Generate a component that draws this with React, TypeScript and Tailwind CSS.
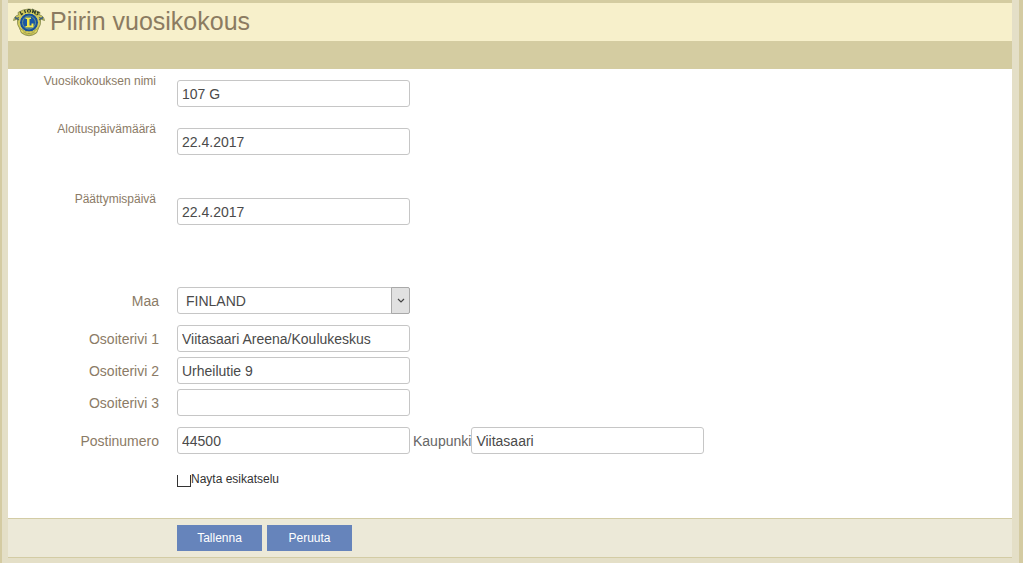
import type { ReactNode } from "react";

const fieldClass =
  "h-[27px] w-[233px] rounded-[3px] border border-[#c6c6c6] bg-white px-1 text-sm text-[#4a4a4a] outline-none";

function Logo() {
  return (
    <svg viewBox="0 0 64 58" className="h-[29px] w-8 shrink-0" role="img" aria-label="Lions">
      <path
        d="M1 25 Q3 15 11 14 L10 9 Q31 -5 54 9 L53 14 Q61 15 63 25 L55 22 Q57 34 50 42 L47 50 Q32 61 17 50 L14 42 Q7 34 9 22 Z"
        fill="#cfc75c"
        stroke="#7c8348"
        strokeWidth="1.5"
      />
      <path d="M4 22 L12 19 M4 18 L12 24 M60 22 L52 19 M60 18 L52 24" fill="none" stroke="#3f5f7a" strokeWidth="2.5" />
      {/* LIONS lettering strokes on the ribbon */}
      <path
        d="M14 7 L17 13 L20 11 M23 4 L25 10 M32 3 a3 3 0 1 0 .1 0 M39 10 L40 4 L44 11 L45 5 M53 9 L49 8 L50 12 L47 14"
        fill="none"
        stroke="#2e3d2a"
        strokeWidth="2.4"
      />
      <circle cx="32" cy="29" r="19" fill="#174f9c" stroke="#e0d95c" strokeWidth="2" />
      <circle cx="32" cy="29" r="13" fill="#1a57a5" stroke="#6f9a84" strokeWidth="2" />
      <path d="M25 19 H36 V22 H33 V35 H37 V31 H41 V39 H25 V36 H28 V22 H25 Z" fill="#f4e94a" />
      <path d="M13 41 Q32 55 51 41 L47 49 Q32 59 17 49 Z" fill="#e3db62" stroke="#858545" strokeWidth="1" />
      <path d="M21 48 Q32 54 43 48" fill="none" stroke="#76783e" strokeWidth="2" strokeDasharray="2 1" />
    </svg>
  );
}

type RowProps = {
  id: string;
  label: string;
  className?: string;
  top?: boolean;
  children: ReactNode;
};

function Row({ id, label, className = "", top = false, children }: RowProps) {
  return (
    <div className={`flex ${top ? "items-start" : "items-center"} ${className}`}>
      <label
        htmlFor={id}
        className={
          top
            ? "w-[148px] shrink-0 text-right text-xs leading-4 text-[#8b7b66]"
            : "w-[151px] shrink-0 text-right text-sm text-[#8b7b66]"
        }
      >
        {label}
      </label>
      <div className={top ? "ml-[21px] flex pt-[7px]" : "ml-[18px] flex items-center"}>{children}</div>
    </div>
  );
}

export default function App() {
  return (
    <div className="min-h-screen border-r-4 border-l-2 border-[#d4cba2] bg-[#e4dfc7] pr-[7px] pl-[6px] font-['Liberation_Sans',Arial,sans-serif]">
      <header className="border-t-[3px] border-[#d4cca1]">
        <div className="flex h-[38px] items-center gap-[5px] bg-[#f7f0cb] pl-[5px]">
          <Logo />
          <h1 className="text-[25px] text-[#8b7b61]">Piirin vuosikokous</h1>
        </div>
        <div className="h-7 bg-[#d4cca1]" />
      </header>

      <form onSubmit={(e) => e.preventDefault()}>
        <div className="bg-white pt-1 pb-[31px]">
          <Row id="name" label="Vuosikokouksen nimi" top>
            <input id="name" className={fieldClass} defaultValue="107 G" />
          </Row>
          <Row id="start" label="Aloituspäivämäärä" className="mt-[14px]" top>
            <input id="start" className={fieldClass} defaultValue="22.4.2017" />
          </Row>
          <Row id="end" label="Päättymispäivä" className="mt-9" top>
            <input id="end" className={fieldClass} defaultValue="22.4.2017" />
          </Row>

          <Row id="country" label="Maa" className="mt-[62px]">
            <div className="relative flex">
              <select id="country" className={`${fieldClass} appearance-none pl-2`}>
                <option>FINLAND</option>
              </select>
              <span className="pointer-events-none absolute inset-y-0 right-0 flex w-[19px] items-center justify-center rounded-r-[2px] border border-[#a9a9a9] bg-[#e1e1e1]">
                <svg viewBox="0 0 8 6" className="h-[6px] w-2">
                  <path d="M1 1 L4 4 L7 1" fill="none" stroke="#444" strokeWidth="1.2" />
                </svg>
              </span>
            </div>
          </Row>
          <Row id="address1" label="Osoiterivi 1" className="mt-[11px]">
            <input id="address1" className={fieldClass} defaultValue="Viitasaari Areena/Koulukeskus" />
          </Row>
          <Row id="address2" label="Osoiterivi 2" className="mt-[5px]">
            <input id="address2" className={fieldClass} defaultValue="Urheilutie 9" />
          </Row>
          <Row id="address3" label="Osoiterivi 3" className="mt-[5px]">
            <input id="address3" className={fieldClass} />
          </Row>
          <Row id="zip" label="Postinumero" className="mt-[11px]">
            <input id="zip" className={fieldClass} defaultValue="44500" />
            <label htmlFor="city" className="ml-[3px] text-sm text-[#666]">
              Kaupunki
            </label>
            <input id="city" className={fieldClass} defaultValue="Viitasaari" />
          </Row>

          <div className="mt-[17px] ml-[169px] flex items-center">
            <input
              id="preview"
              type="checkbox"
              className="mt-1 h-3 w-[14px] appearance-none border border-t-0 border-[#333] bg-white checked:bg-[#6684bb]"
            />
            <label htmlFor="preview" className="text-xs leading-4 text-[#333]">
              Nayta esikatselu
            </label>
          </div>
        </div>

        <footer className="flex gap-[5px] border-y border-[#d3cca5] bg-[#ece9d8] py-[6px] pl-[169px]">
          <button type="submit" className="h-[26px] w-[85px] bg-[#6684bb] text-xs text-white">
            Tallenna
          </button>
          <button type="button" className="h-[26px] w-[85px] bg-[#6684bb] text-xs text-white">
            Peruuta
          </button>
        </footer>
      </form>
    </div>
  );
}
